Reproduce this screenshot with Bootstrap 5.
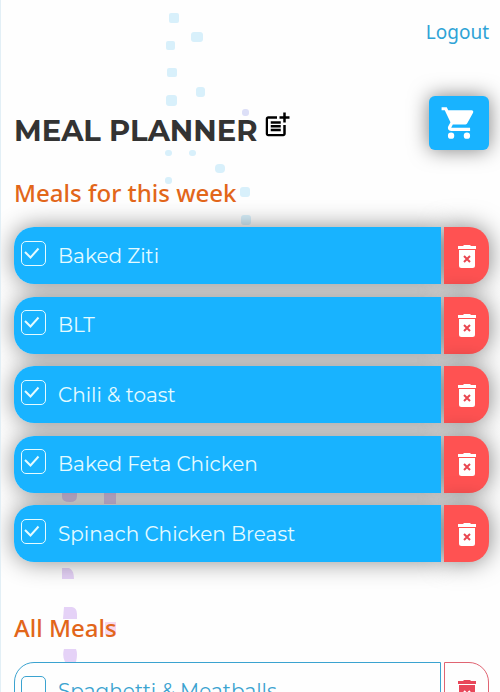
<!DOCTYPE html>
<html lang="en">
<head>
<meta charset="utf-8">
<meta name="viewport" content="width=device-width, initial-scale=1">
<title>Meal Planner</title>
<link rel="stylesheet" href="https://cdn.jsdelivr.net/npm/bootstrap@5.3.0/dist/css/bootstrap.min.css">
<style>
:root { --sky: #18b3ff; --line: #3ba3d0; --coral: #ff5252; }
html { overflow: hidden; }
body { font-family: "Segoe UI", "Noto Sans", sans-serif; font-size: 20px; line-height: 30px; background: #fefefe; border-left: 1px solid #e2eff6; }
.planner { position: relative; z-index: 0; padding: 17px 11px 0 13px; }
.backdrop { position: absolute; top: 0; left: 0; z-index: -2; pointer-events: none; }
.logout { color: #2fa3d6; font-size: 19px; }
.title-bar { margin-top: 49px; }
.title { font-family: Montserrat, Inter, sans-serif; font-size: 29px; line-height: 36px; font-weight: 700; color: #333; }
.cart { width: 60px; height: 54px; color: #fff; background: var(--sky); border-radius: 6px; box-shadow: 0 0 20px rgba(0,0,0,.5); }
.heading { color: #e2661a; font-size: 24px; line-height: 36px; font-weight: 500; }
.week-title { margin-top: 25px; }
.meals { isolation: isolate; }
.week { min-height: 335px; }
.meal { gap: 3px; min-height: 57px; font-family: Montserrat, Inter, sans-serif; }
.meal-name { position: relative; padding: 0 7px; gap: 12px; color: #e4fbff; background: var(--sky); border-radius: 20px 0 0 20px; }
.meal-name::before { content: ""; position: absolute; inset: 0; z-index: -1; border-radius: inherit; box-shadow: 0 0 24px rgba(0,0,0,.45); }
.tick { appearance: none; width: 25px; height: 25px; margin: 0 0 5px; color: inherit; border: 1px solid currentColor; border-radius: 5px; background: transparent center / 100% no-repeat; }
.tick:checked { background-image: url("data:image/svg+xml,%3Csvg xmlns='http://www.w3.org/2000/svg' viewBox='0 0 23 23'%3E%3Cpath d='M3 10l5.500 5.500 8-9' fill='none' stroke='%23e4fbff' stroke-width='2'/%3E%3C/svg%3E"); }
.remove { width: 45px; color: #fff; background: var(--coral); border-radius: 0 20px 20px 0; box-shadow: 0 0 24px rgba(0,0,0,.5); }
.remove svg { display: block; margin: 0 auto; }
.idle .meal-name { color: var(--line); background: #fefefe; border: 1px solid var(--line); padding: 0 6px; }
.idle .meal-name::before { content: none; }
.idle .remove { color: #e8475a; background: #fefefe; border: 1px solid #e06472; box-shadow: none; }
.idle .remove svg { --hole: #fff; }
</style>
</head>
<body>
<svg width="0" height="0" class="position-absolute" aria-hidden="true">
<symbol id="bin" viewBox="0 0 18 24"><path fill="currentColor" d="M0 2h5l1-1h6l1 1h5v3H0zM1 6h16v15.500q0 2.500-2.500 2.500h-11Q1 24 1 21.500z"/><path d="M6 12l6 6m0-6l-6 6" fill="none" stroke="var(--hole, #e94650)" stroke-width="2"/></symbol>
</svg>
<main class="planner">
<svg class="backdrop" width="260" height="700" aria-hidden="true">
<g fill="#d8f0fb"><rect x="168" y="13" width="10" height="10" rx="2"/><rect x="190" y="32" width="12" height="10" rx="3"/><rect x="165" y="41" width="9" height="9" rx="2"/><rect x="166" y="68" width="10" height="9" rx="2"/><rect x="195" y="87" width="9" height="10" rx="3"/><rect x="165" y="95" width="11" height="11" rx="3"/><rect x="164" y="150" width="7" height="6" rx="3"/><rect x="188" y="150" width="7" height="6" rx="3"/><rect x="214" y="164" width="10" height="9" rx="4"/><rect x="164" y="177" width="7" height="7" rx="3"/><rect x="239" y="187" width="10" height="10" rx="3"/><rect x="240" y="215" width="10" height="10" rx="3"/></g>
<rect x="241" y="109" width="7" height="7" rx="3" fill="#dcdff7"/>
<g fill="#e5d2f7"><path d="M61 492h15v4q0 6-7 6-8 0-8-5zM103 493h12v11h-12zM61 568h7q5 2 5 11H61zM63 607h8q5 1 5 7v5H62zM63 649h12q2 5 0 13H64q-3-6-1-13z"/><path fill="#f7d9ef" d="M104 622h11v13h-11z"/></g>
</svg>
<nav class="d-flex justify-content-end"><a class="logout text-decoration-none" href="#">Logout</a></nav>
<header class="title-bar d-flex align-items-center">
<h1 class="title mb-0 mt-3">MEAL PLANNER</h1>
<button class="btn p-0 border-0 ms-1 mt-1 lh-1 text-black" type="button" aria-label="Add meal"><svg class="d-block" width="30" height="30" viewBox="0 0 24 24" fill="currentColor"><path d="M17 19.200H4.800V7H12V5H5C3.900 5 3 5.900 3 7v12c0 1.100.9 2 2 2h12c1.100 0 2-.9 2-2v-7h-2zM19 2h-2v3h-3v2h3v3h2V7h3V5h-3zM7 9h8v2H7zM7 12h8v2H7zM7 15h8v2H7z"/></svg></button>
<button class="cart btn p-0 border-0 ms-auto" type="button" aria-label="Shopping list"><svg width="38" height="38" viewBox="0 0 24 24" fill="currentColor"><path d="M7 18a2 2 0 1 0 0 4 2 2 0 0 0 0-4zM1 2v2h2l3.600 7.590-1.350 2.450C4.520 15.370 5.480 17 7 17h12v-2H7.420a.25.25 0 0 1-.22-.37L8.100 13h7.450c.75 0 1.410-.41 1.750-1.030l3.580-6.490A1 1 0 0 0 20 4H5.210l-.94-2zM17 18a2 2 0 1 0 0 4 2 2 0 0 0 0-4z"/></svg></button>
</header>
<section class="meals">
<h2 class="heading week-title mb-3">Meals for this week</h2>
<ul class="week list-unstyled d-flex flex-column justify-content-between mb-5">
<li class="meal d-flex"><label class="meal-name d-flex align-items-center flex-grow-1"><input class="tick" type="checkbox" checked>Baked Ziti</label><button class="remove btn p-0 border-0" type="button" aria-label="Delete Baked Ziti"><svg width="18" height="24"><use href="#bin"/></svg></button></li>
<li class="meal d-flex"><label class="meal-name d-flex align-items-center flex-grow-1"><input class="tick" type="checkbox" checked>BLT</label><button class="remove btn p-0 border-0" type="button" aria-label="Delete BLT"><svg width="18" height="24"><use href="#bin"/></svg></button></li>
<li class="meal d-flex"><label class="meal-name d-flex align-items-center flex-grow-1"><input class="tick" type="checkbox" checked>Chili &amp; toast</label><button class="remove btn p-0 border-0" type="button" aria-label="Delete Chili &amp; toast"><svg width="18" height="24"><use href="#bin"/></svg></button></li>
<li class="meal d-flex"><label class="meal-name d-flex align-items-center flex-grow-1"><input class="tick" type="checkbox" checked>Baked Feta Chicken</label><button class="remove btn p-0 border-0" type="button" aria-label="Delete Baked Feta Chicken"><svg width="18" height="24"><use href="#bin"/></svg></button></li>
<li class="meal d-flex"><label class="meal-name d-flex align-items-center flex-grow-1"><input class="tick" type="checkbox" checked>Spinach Chicken Breast</label><button class="remove btn p-0 border-0" type="button" aria-label="Delete Spinach Chicken Breast"><svg width="18" height="24"><use href="#bin"/></svg></button></li>
</ul>
</section>
<section>
<h2 class="heading mb-3">All Meals</h2>
<ul class="idle list-unstyled mb-0">
<li class="meal d-flex"><label class="meal-name d-flex align-items-center flex-grow-1"><input class="tick" type="checkbox">Spaghetti &amp; Meatballs</label><button class="remove btn p-0" type="button" aria-label="Delete Spaghetti &amp; Meatballs"><svg width="18" height="24"><use href="#bin"/></svg></button></li>
</ul>
</section>
</main>
<script src="https://cdn.jsdelivr.net/npm/bootstrap@5.3.0/dist/js/bootstrap.bundle.min.js"></script>
</body>
</html>
